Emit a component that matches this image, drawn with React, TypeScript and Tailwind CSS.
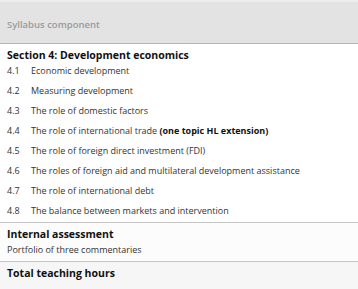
import React from "react";

const topics = [
  { num: "4.1", text: "Economic development" },
  { num: "4.2", text: "Measuring development" },
  { num: "4.3", text: "The role of domestic factors" },
  { num: "4.4", text: "The role of international trade ", bold: "(one topic HL extension)" },
  { num: "4.5", text: "The role of foreign direct investment (FDI)" },
  { num: "4.6", text: "The roles of foreign aid and multilateral development assistance" },
  { num: "4.7", text: "The role of international debt" },
  { num: "4.8", text: "The balance between markets and intervention" },
];

export default function App() {
  return (
    <div
      className="w-[358px] h-[289px] bg-white overflow-hidden text-[#222]"
      style={{ fontFamily: '"Open Sans", "Noto Sans", sans-serif' }}
    >
      <div className="h-[44px] border-t-2 border-[#ededed] bg-[#e3e3e3] border-b border-b-[#b5b5b5] flex items-center pt-[5px] px-[7px]">
        <span className="text-[9.5px] font-semibold text-[#9a9a9a]">Syllabus component</span>
      </div>

      <div className="border-b border-[#c4c4c4] pb-px">
        <div className="pt-[5px] px-[7px] h-[17px] leading-[12px] text-[10.5px] font-bold text-[#111]">
          Section 4: Development economics
        </div>
        {topics.map(t => (
          <div key={t.num} className="flex h-[20px] items-center px-[7px] text-[9px]">
            <span className="w-[24px] text-[#333]">{t.num}</span>
            <span className="text-[#333]">
              {t.text}
              {t.bold && <span className="font-bold text-[#111]">{t.bold}</span>}
            </span>
          </div>
        ))}
      </div>

      <div className="border-b border-[#c4c4c4] bg-[#fcfcfc] px-[7px] h-[39px] flex flex-col justify-center">
        <div className="text-[10.5px] font-bold leading-[16px] text-[#111]">Internal assessment</div>
        <div className="text-[9px] leading-[16px] text-[#333]">Portfolio of three commentaries</div>
      </div>

      <div className="bg-[#f6f6f6] px-[7px] h-[28px] flex items-start pt-[3px]">
        <div className="text-[10.5px] font-bold leading-[16px] text-[#111]">Total teaching hours</div>
      </div>
    </div>
  );
}
